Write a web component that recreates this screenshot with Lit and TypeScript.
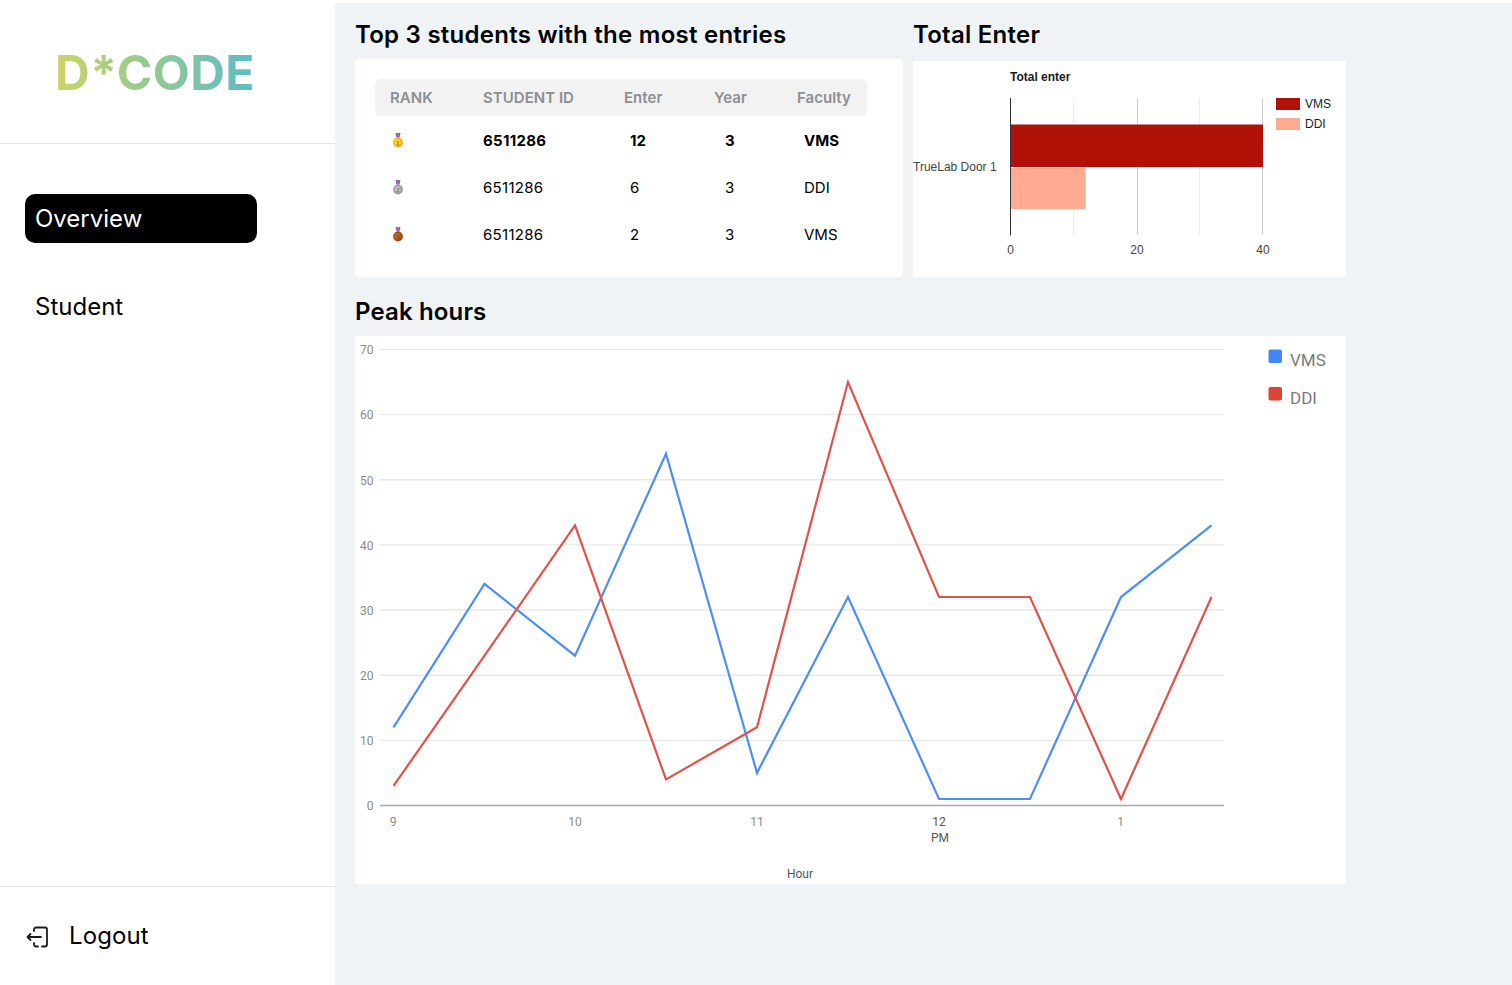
import { LitElement, css, html, svg } from 'lit';
import { customElement } from 'lit/decorators.js';

const HOUR_X = [38.5, 129.5, 220, 311, 402, 493, 584, 675, 766, 856.5];
const VMS = [12, 34, 23, 54, 5, 32, 1, 1, 32, 43];
const DDI = [3, 23, 43, 4, 12, 65, 32, 32, 1, 32];
const Y_TICKS = [0, 10, 20, 30, 40, 50, 60, 70];

const valueY = (v: number) => 469.5 - v * 6.515;
const linePoints = (data: number[]) => data.map((v, i) => `${HOUR_X[i]},${valueY(v)}`).join(' ');

const STUDENTS = [
  { rank: 1, id: '6511286', enter: 12, year: 3, faculty: 'VMS', top: true },
  { rank: 2, id: '6511286', enter: 6, year: 3, faculty: 'DDI', top: false },
  { rank: 3, id: '6511286', enter: 2, year: 3, faculty: 'VMS', top: false },
];

const MEDAL_COLORS: Record<number, string[]> = {
  1: ['#f2ad05', '#ffd23a', '#a8700a'],
  2: ['#9a9a9a', '#bdbdbd', '#6a6a6a'],
  3: ['#9c4a12', '#bb6a28', '#5d2c08'],
};

@customElement('medal-icon')
class MedalIcon extends LitElement {
  static properties = { rank: { type: Number } };
  rank = 1;

  static styles = css`
    :host {
      display: block;
      width: 12px;
      height: 16px;
    }
    svg {
      display: block;
    }
    text {
      font-family: 'Liberation Sans', sans-serif;
      font-size: 6px;
    }
  `;

  render() {
    const [fill, light, dark] = MEDAL_COLORS[this.rank];
    return html`<svg width="12" height="16" viewBox="0 0 12 16">
      <path d="M3.5 0h5l-1 4.5h-3z" fill="#5a6fd0" />
      <path d="M5 0h2l-0.5 4.5h-1z" fill="#e8606b" />
      <circle cx="6" cy="9.5" r="4.9" fill="${fill}" />
      <circle cx="5.6" cy="9.2" r="3.2" fill="${light}" />
      <text x="6" y="11.7" text-anchor="middle" fill="${dark}">${this.rank}</text>
    </svg>`;
  }
}

@customElement('total-chart')
class TotalChart extends LitElement {
  static styles = css`
    :host {
      display: block;
    }
    svg {
      display: block;
    }
    text {
      font-family: 'Liberation Sans', Arial, sans-serif;
      font-size: 12px;
      fill: #444444;
    }
    .title {
      font-weight: 700;
      fill: #1a1a1a;
    }
    .legend {
      fill: #222222;
    }
  `;

  render() {
    return html`<svg width="433" height="216" viewBox="0 0 433 216">
      <text class="title" x="97" y="19.5">Total enter</text>
      <g stroke-width="1">
        <line x1="160.5" y1="37" x2="160.5" y2="174" stroke="#ebebeb" />
        <line x1="286.5" y1="37" x2="286.5" y2="174" stroke="#ebebeb" />
        <line x1="224.5" y1="37" x2="224.5" y2="174" stroke="#cccccc" />
        <line x1="349.5" y1="37" x2="349.5" y2="174" stroke="#cccccc" />
      </g>
      <rect x="97.5" y="63.5" width="252.5" height="42.5" fill="#b11207" />
      <rect x="97.5" y="107" width="75" height="41" fill="#ffab91" />
      <line x1="97.5" y1="37" x2="97.5" y2="174.5" stroke="#333333" />
      <text x="0" y="110">TrueLab Door 1</text>
      <text x="97.5" y="192.5" text-anchor="middle">0</text>
      <text x="224" y="192.5" text-anchor="middle">20</text>
      <text x="350" y="192.5" text-anchor="middle">40</text>
      <rect x="363" y="37" width="24" height="12" fill="#b11207" />
      <rect x="363" y="57" width="24" height="12" fill="#ffab91" />
      <text class="legend" x="392" y="47">VMS</text>
      <text class="legend" x="392" y="67">DDI</text>
    </svg>`;
  }
}

@customElement('peak-chart')
class PeakChart extends LitElement {
  static styles = css`
    :host {
      display: block;
    }
    svg {
      display: block;
    }
    text {
      font-family: Roboto, sans-serif;
      font-size: 12px;
      fill: #8a8a8a;
    }
    .axis-title {
      fill: #555555;
    }
    .hour-dark {
      fill: #555555;
    }
    .legend {
      font-size: 17px;
      fill: #7a7a7a;
    }
  `;

  render() {
    return html`<svg width="991" height="548" viewBox="0 0 991 548">
      ${Y_TICKS.map((t) =>
        svg`<line x1="25" x2="869" y1="${valueY(t)}" y2="${valueY(t)}"
            stroke="${t === 0 ? '#a8a8a8' : '#e8e8e8'}" stroke-width="1.4" />
          <text x="18.5" y="${valueY(t) + 4.8}" text-anchor="end">${t}</text>`,
      )}
      ${[['9', 38], ['10', 220], ['11', 402], ['1', 765.5]].map(
        ([label, x]) => svg`<text x="${x}" y="489.6" text-anchor="middle">${label}</text>`,
      )}
      <text class="hour-dark" x="584" y="489.6" text-anchor="middle">12</text>
      <text class="hour-dark" x="585" y="505.5" text-anchor="middle">PM</text>
      <text class="axis-title" x="445" y="541.5" text-anchor="middle">Hour</text>
      <polyline points="${linePoints(VMS)}" fill="none" stroke="#4e8ef7" stroke-width="2.2" />
      <polyline points="${linePoints(DDI)}" fill="none" stroke="#e0524a" stroke-width="2.2" />
      <rect x="913.5" y="13.5" width="13.5" height="13.5" rx="2" fill="#4285f4" />
      <rect x="913.5" y="51" width="13.5" height="13.5" rx="2" fill="#db4437" />
      <text class="legend" x="935" y="30">VMS</text>
      <text class="legend" x="935" y="68">DDI</text>
    </svg>`;
  }
}

@customElement('app-root')
class AppRoot extends LitElement {
  static styles = css`
    :host {
      display: flex;
      height: 985px;
      background: #ffffff;
      font-family: Inter, 'Liberation Sans', sans-serif;
      color: #000000;
      overflow: hidden;
    }
    .sidebar {
      width: 335px;
      flex: none;
      display: flex;
      flex-direction: column;
    }
    .brand {
      border-bottom: 1px solid #e5e5ea;
      padding-left: 55px;
      padding-top: 2px;
      box-sizing: border-box;
      height: 144px;
      display: flex;
      align-items: center;
    }
    .logo {
      font-size: 48px;
      font-weight: 700;
      line-height: 58px;
      letter-spacing: 0.5px;
      background: linear-gradient(90deg, #cbd465, #5bbcc6);
      -webkit-background-clip: text;
      background-clip: text;
      color: transparent;
    }
    .nav {
      flex: 1;
      display: flex;
      flex-direction: column;
      gap: 39px;
      padding: 50px 78px 0 25px;
    }
    .nav-item {
      height: 49px;
      border-radius: 10px;
      padding-left: 10px;
      display: flex;
      align-items: center;
      font-size: 24px;
    }
    .nav-item.active {
      background: #000000;
      color: #ffffff;
    }
    .logout {
      height: 98px;
      border-top: 1px solid #e5e5ea;
      padding-left: 26px;
      display: flex;
      align-items: center;
      gap: 21px;
      font-size: 24px;
      letter-spacing: 0.1px;
    }
    .logout svg {
      display: block;
      flex: none;
      margin-top: 2px;
    }
    .logout span {
      margin-top: -1px;
    }
    .main {
      flex: 1;
      margin-top: 3px;
      background: #eff3f6;
      padding: 17px 166px 0 20px;
      display: flex;
      flex-direction: column;
    }
    .top-row {
      display: flex;
      gap: 10px;
      height: 257px;
    }
    .top-left {
      width: 548px;
      flex: none;
      display: flex;
      flex-direction: column;
    }
    .top-right {
      flex: 1;
      display: flex;
      flex-direction: column;
    }
    h2 {
      margin: 0;
      font-size: 24px;
      font-weight: 600;
      line-height: 29px;
      letter-spacing: 0.25px;
    }
    .top-left h2 {
      margin-bottom: 10px;
    }
    .top-right h2 {
      margin-bottom: 12px;
    }
    .peak-title {
      margin-top: 20px;
      margin-bottom: 10px;
      letter-spacing: 0.15px;
    }
    .card {
      background: #ffffff;
      border-radius: 4px;
      flex: 1;
    }
    .table-card {
      padding: 20px 36px 0 20px;
    }
    .square {
      border-radius: 0;
    }
    .peak-card {
      flex: none;
    }
    .row {
      display: grid;
      grid-template-columns: 93px 141px 90px 83px 85px;
      align-items: center;
      height: 47px;
      font-size: 15px;
    }
    .head {
      height: 37px;
      margin-bottom: 1px;
      background: #f2f2f3;
      border-radius: 6px;
      font-weight: 600;
      color: #8e8e93;
      letter-spacing: 0.03px;
    }
    .head span {
      padding-left: 15px;
    }
    .row.top {
      font-weight: 700;
    }
    .rank {
      padding-left: 16.5px;
    }
    .id {
      padding-left: 15px;
      letter-spacing: 0.3px;
    }
    .enter {
      padding-left: 21px;
    }
    .year {
      padding-left: 26px;
    }
    .faculty {
      padding-left: 22px;
    }
  `;

  render() {
    return html`
      <aside class="sidebar">
        <div class="brand"><span class="logo">D*CODE</span></div>
        <nav class="nav">
          <div class="nav-item active">Overview</div>
          <div class="nav-item">Student</div>
        </nav>
        <div class="logout">
          <svg width="22" height="22" viewBox="0 0 22 22" fill="none" stroke="#1c1c1e" stroke-width="1.8" stroke-linecap="round" stroke-linejoin="round">
            <path d="M8 5V3.5a2 2 0 0 1 2-2h9a2 2 0 0 1 2 2v15a2 2 0 0 1-2 2h-3M12 20.5h-2a2 2 0 0 1-2-2V17" />
            <path d="M15 11H1.5M4.5 8l-3 3 3 3" />
          </svg>
          <span>Logout</span>
        </div>
      </aside>
      <main class="main">
        <div class="top-row">
          <section class="top-left">
            <h2>Top 3 students with the most entries</h2>
            <div class="card table-card">
              <div class="row head">
                <span>RANK</span><span>STUDENT ID</span><span>Enter</span><span>Year</span><span>Faculty</span>
              </div>
              ${STUDENTS.map(
                (s) => html`<div class="row ${s.top ? 'top' : ''}">
                  <div class="rank"><medal-icon .rank=${s.rank}></medal-icon></div>
                  <div class="id">${s.id}</div>
                  <div class="enter">${s.enter}</div>
                  <div class="year">${s.year}</div>
                  <div class="faculty">${s.faculty}</div>
                </div>`,
              )}
            </div>
          </section>
          <section class="top-right">
            <h2>Total Enter</h2>
            <div class="card square"><total-chart></total-chart></div>
          </section>
        </div>
        <h2 class="peak-title">Peak hours</h2>
        <div class="card square peak-card"><peak-chart></peak-chart></div>
      </main>
    `;
  }
}
